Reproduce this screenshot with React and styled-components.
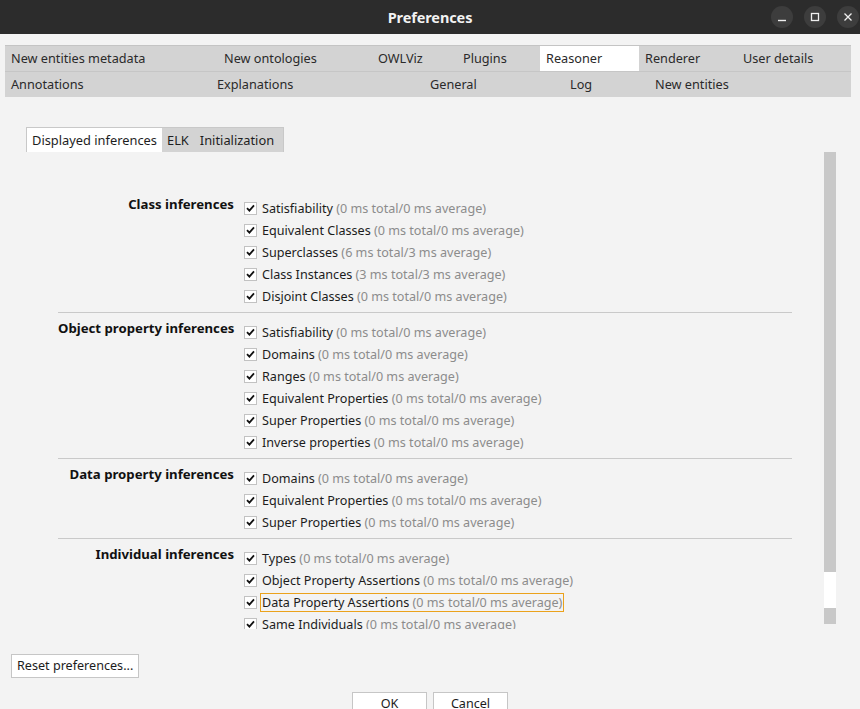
import React from 'react';
import styled, {createGlobalStyle} from "styled-components";

const GlobalStyle = createGlobalStyle`
  html, body {
    margin: 0;
    padding: 0;
    background: #f3f3f3;
    font-family: "Noto Sans", "Open Sans", sans-serif;
    color: #1c1c1c;
  }
`;

const outerTabs = [
    [
        {label: "New entities metadata", width: 213},
        {label: "New ontologies", width: 154},
        {label: "OWLViz", width: 85},
        {label: "Plugins", width: 83},
        {label: "Reasoner", width: 99, active: true},
        {label: "Renderer", width: 98},
        {label: "User details"},
    ],
    [
        {label: "Annotations", width: 206},
        {label: "Explanations", width: 213},
        {label: "General", width: 140},
        {label: "Log", width: 85},
        {label: "New entities"},
    ],
];

const sections = [
    {
        title: "Class inferences",
        items: [
            ["Satisfiability", "0 ms total/0 ms average"],
            ["Equivalent Classes", "0 ms total/0 ms average"],
            ["Superclasses", "6 ms total/3 ms average"],
            ["Class Instances", "3 ms total/3 ms average"],
            ["Disjoint Classes", "0 ms total/0 ms average"],
        ],
    },
    {
        title: "Object property inferences",
        items: [
            ["Satisfiability", "0 ms total/0 ms average"],
            ["Domains", "0 ms total/0 ms average"],
            ["Ranges", "0 ms total/0 ms average"],
            ["Equivalent Properties", "0 ms total/0 ms average"],
            ["Super Properties", "0 ms total/0 ms average"],
            ["Inverse properties", "0 ms total/0 ms average"],
        ],
    },
    {
        title: "Data property inferences",
        items: [
            ["Domains", "0 ms total/0 ms average"],
            ["Equivalent Properties", "0 ms total/0 ms average"],
            ["Super Properties", "0 ms total/0 ms average"],
        ],
    },
    {
        title: "Individual inferences",
        items: [
            ["Types", "0 ms total/0 ms average"],
            ["Object Property Assertions", "0 ms total/0 ms average"],
            ["Data Property Assertions", "0 ms total/0 ms average", true],
            ["Same Individuals", "0 ms total/0 ms average"],
        ],
    },
];

function CheckBox() {
    return (
        <Box>
            <svg width="9" height="8" viewBox="0 0 9 8">
                <path d="M1 4.2 L3.4 6.6 L8 1.4" fill="none" stroke="#111" strokeWidth="1.8"/>
            </svg>
        </Box>
    );
}

export default function App() {
    return (
        <Window>
            <GlobalStyle/>
            <TitleBar>
                <span/>
                <Title>Preferences</Title>
                <WinButtons>
                    <WinButton>
                        <svg width="10" height="10" viewBox="0 0 10 10"><path d="M1 8.5 H9" stroke="#eee" strokeWidth="1.4"/></svg>
                    </WinButton>
                    <WinButton>
                        <svg width="10" height="10" viewBox="0 0 10 10"><rect x="1.5" y="1.5" width="7" height="7" fill="none" stroke="#eee" strokeWidth="1.3"/></svg>
                    </WinButton>
                    <WinButton>
                        <svg width="10" height="10" viewBox="0 0 10 10"><path d="M1.5 1.5 L8.5 8.5 M8.5 1.5 L1.5 8.5" stroke="#eee" strokeWidth="1.3"/></svg>
                    </WinButton>
                </WinButtons>
            </TitleBar>

            <TabStrip>
                {outerTabs.map((row, i) => (
                    <TabRow key={i} $first={i === 0}>
                        {row.map(t => (
                            <OuterTab key={t.label} $width={t.width} $active={t.active}>{t.label}</OuterTab>
                        ))}
                    </TabRow>
                ))}
            </TabStrip>

            <Panel>
                <InnerTabs>
                    <InnerTab $active>Displayed inferences</InnerTab>
                    <InnerTab>ELK</InnerTab>
                    <InnerTab $last>Initialization</InnerTab>
                </InnerTabs>
                <ScrollArea>
                    <Viewport>
                        {sections.map((s, i) => (
                            <Section key={s.title} $first={i === 0}>
                                <SectionTitle>{s.title}</SectionTitle>
                                <Items>
                                    {s.items.map(([name, time, focused]) => (
                                        <Item key={name}>
                                            <CheckBox/>
                                            <ItemLabel $focused={focused}>
                                                {name} <Timing>({time})</Timing>
                                            </ItemLabel>
                                        </Item>
                                    ))}
                                </Items>
                            </Section>
                        ))}
                    </Viewport>
                    <ScrollBar>
                        <Thumb/>
                    </ScrollBar>
                </ScrollArea>
            </Panel>

            <Footer>
                <Button>Reset preferences...</Button>
                <DialogButtons>
                    <Button $wide>OK</Button>
                    <Button $wide>Cancel</Button>
                </DialogButtons>
            </Footer>
        </Window>
    );
}

const Window = styled.div`
  width: 860px;
  height: 709px;
  display: flex;
  flex-direction: column;
  overflow: hidden;
  background: #f3f3f3;
`;

const TitleBar = styled.div`
  height: 34px;
  flex-shrink: 0;
  background: #2c2c2c;
  display: grid;
  grid-template-columns: 1fr auto 1fr;
  align-items: center;
`;

const Title = styled.div`
  color: #f2f2f2;
  font-size: 14.5px;
  font-weight: bold;
  letter-spacing: -0.1px;
`;

const WinButtons = styled.div`
  display: flex;
  justify-content: flex-end;
  gap: 11px;
  padding-right: 1px;
`;

const WinButton = styled.div`
  width: 22px;
  height: 22px;
  border-radius: 50%;
  background: #3d3d3d;
  display: flex;
  align-items: center;
  justify-content: center;
`;

const TabStrip = styled.div`
  margin: 11px 9px 0 5px;
  background: #d3d3d3;
  border-top: 1px solid #c4c4c4;
`;

const TabRow = styled.div`
  display: flex;
  height: 25px;
  border-top: ${p => p.$first ? "none" : "1px solid #c6c6c6"};
`;

const OuterTab = styled.div`
  ${p => p.$width ? `width: ${p.$width}px;` : "flex: 1;"}
  flex-shrink: 0;
  box-sizing: border-box;
  padding-left: 6px;
  font-size: 12.7px;
  line-height: 25px;
  color: #2a2a2a;
  background: ${p => p.$active ? "#ffffff" : "transparent"};
  white-space: nowrap;
`;

const Panel = styled.div`
  margin: 30px 0 0 26px;
  display: flex;
  flex-direction: column;
`;

const InnerTabs = styled.div`
  display: flex;
  height: 25px;
`;

const InnerTab = styled.div`
  box-sizing: border-box;
  padding: 0 ${p => p.$last ? "9px 0 6px" : "5px"};
  font-size: 12.85px;
  line-height: 24px;
  color: #1e1e1e;
  background: ${p => p.$active ? "#ffffff" : "#d3d3d3"};
  border-top: 1px solid #c8c8c8;
  border-left: ${p => p.$active ? "1px solid #c8c8c8" : "none"};
  border-right: ${p => p.$last ? "1px solid #c8c8c8" : "none"};
`;

const ScrollArea = styled.div`
  display: flex;
  width: 810px;
  height: 477px;
`;

const Viewport = styled.div`
  flex: 1;
  overflow: hidden;
  padding: 45px 0 0 32px;
`;

const Section = styled.div`
  width: 734px;
  display: grid;
  grid-template-columns: 176px 1fr;
  column-gap: 10px;
  padding: ${p => p.$first ? "0" : "8px"} 0 5px;
  border-top: ${p => p.$first ? "none" : "1px solid #c9c9c9"};
`;

const SectionTitle = styled.div`
  text-align: right;
  font-size: 13.2px;
  font-weight: bold;
  line-height: 15px;
  color: #111;
  white-space: nowrap;
`;

const Items = styled.div`
  display: flex;
  flex-direction: column;
`;

const Item = styled.div`
  height: 22px;
  display: flex;
  align-items: center;
  gap: 4px;
`;

const Box = styled.div`
  width: 11px;
  height: 11px;
  border: 1px solid #c2c2c2;
  background: #ffffff;
  display: flex;
  align-items: center;
  justify-content: center;
`;

const ItemLabel = styled.span`
  font-size: 12.6px;
  line-height: 17px;
  color: #1c1c1c;
  white-space: nowrap;
  padding: 0 1px;
  margin-left: -1px;
  border: 1px solid ${p => p.$focused ? "#eba21c" : "transparent"};
`;

const Timing = styled.span`
  color: #8c8c8c;
`;

const ScrollBar = styled.div`
  width: 12px;
  height: 472px;
  background: #c8c8c8;
  display: flex;
  flex-direction: column;
  justify-content: flex-end;
  padding-bottom: 16px;
  box-sizing: border-box;
`;

const Thumb = styled.div`
  height: 36px;
  background: #ffffff;
`;

const Footer = styled.div`
  display: flex;
  flex-direction: column;
  padding: 25px 0 0 11px;
`;

const DialogButtons = styled.div`
  display: flex;
  justify-content: center;
  gap: 6px;
  margin: 14px 0 0 -11px;
`;

const Button = styled.div`
  align-self: flex-start;
  box-sizing: border-box;
  ${p => p.$wide ? "width: 75px; text-align: center;" : "padding: 0 5px;"}
  height: 24px;
  line-height: 22px;
  font-size: 12.6px;
  color: #1c1c1c;
  background: #ffffff;
  border: 1px solid #c6c6c6;
`;
